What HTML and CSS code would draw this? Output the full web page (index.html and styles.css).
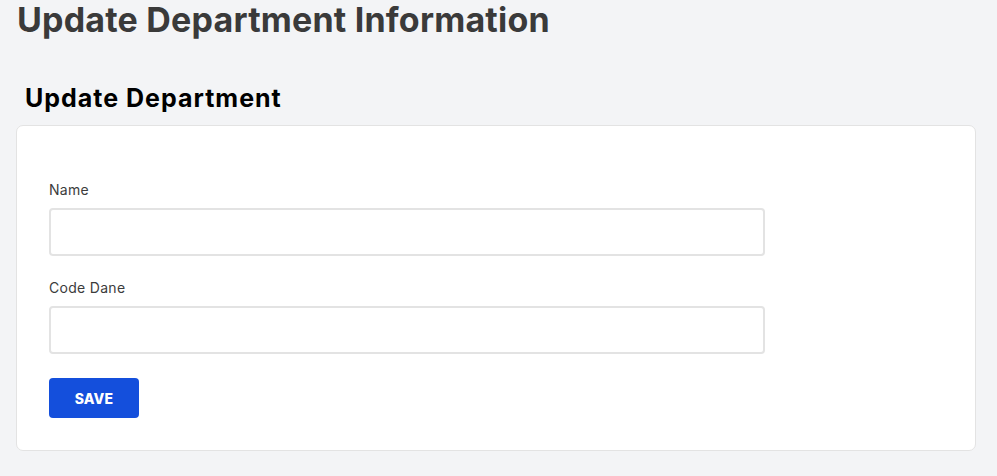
FILE: index.html
```html
<!DOCTYPE html>
<html>
<head>
<meta charset="utf-8">
<link rel="stylesheet" href="styles.css">
</head>
<body>
<h1 class="page-title">Update Department Information</h1>
<section class="panel">
  <h2 class="panel-title">Update Department</h2>
  <div class="card">
    <form class="form">
      <div class="field">
        <label class="label" for="name">Name</label>
        <input class="input" id="name" type="text">
      </div>
      <div class="field">
        <label class="label" for="code">Code Dane</label>
        <input class="input" id="code" type="text">
      </div>
      <button class="btn" type="button">SAVE</button>
    </form>
  </div>
</section>
</body>
</html>
```
FILE: styles.css
```css
* { box-sizing: border-box; }
html, body { margin: 0; }
body {
  background: #f3f4f6;
  font-family: Inter, "Noto Sans", sans-serif;
  padding: 0 21px 0 16px;
}
.page-title {
  margin: 0;
  padding: 0 0 0 1px;
  font-size: 34px;
  line-height: 40px;
  font-weight: 700;
  color: #3a3a3a;
  letter-spacing: 0.2px;
}
.panel { margin-top: 43px; }
.panel-title {
  margin: 0 0 12px 9px;
  font-size: 25px;
  line-height: 30px;
  font-weight: 700;
  color: #000;
  letter-spacing: 1px;
}
.card {
  background: #fff;
  border: 1px solid #e3e3e3;
  border-radius: 7px;
  padding: 54px 32px 31px 32px;
  height: 326px;
}
.form { width: 716px; display: flex; flex-direction: column; }
.field { display: flex; flex-direction: column; margin-bottom: 22px; }
.label {
  font-size: 14px;
  line-height: 20px;
  color: #3c3c3c;
  margin-bottom: 8px;
  letter-spacing: 0.3px;
}
.input {
  height: 48px;
  border: 2px solid #e3e3e3;
  border-radius: 4px;
  background: #fff;
  font: inherit;
}
.btn {
  align-self: flex-start;
  width: 90px;
  height: 40px;
  margin-top: 2px;
  background: #144fdc;
  color: #fff;
  border: 0;
  border-radius: 4px;
  font-family: Inter, sans-serif;
  font-weight: 800;
  font-size: 14px;
  letter-spacing: 0.2px;
}
```
